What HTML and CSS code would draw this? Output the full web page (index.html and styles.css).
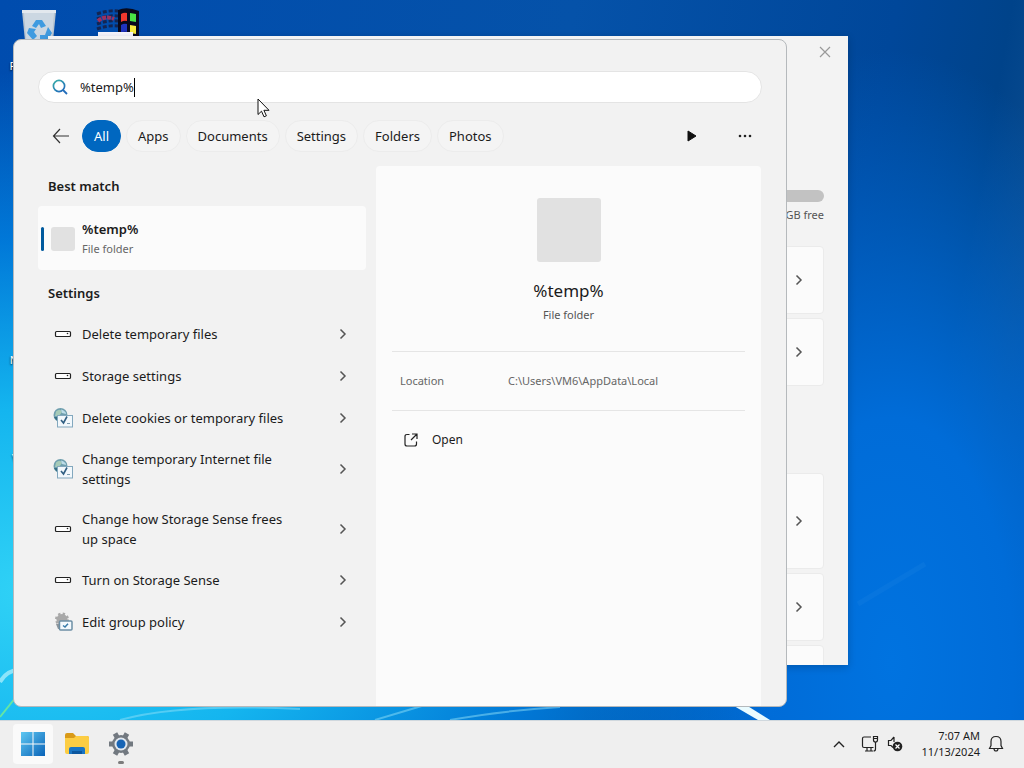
FILE: index.html
```
<!DOCTYPE html>
<html lang="en">
<head>
    <meta charset="UTF-8">
    <title>Search</title>
    <meta name="viewport" content="width=device-width, initial-scale=1.0">
    <link rel="stylesheet" href="styles.css">
</head>
<body>
    <!-- shared icons -->
    <svg class="symbols" aria-hidden="true">
        <symbol id="chevron" viewBox="0 0 8 12"><path d="M1.5 1.5 6 6 1.5 10.5" fill="none" stroke="currentColor" stroke-width="1.5"/></symbol>
        <symbol id="drive" viewBox="0 0 20 20"><rect x="2.5" y="7.5" width="15" height="5" rx="1" fill="#fff" stroke="#222" stroke-width="1.2"/><circle cx="14.5" cy="9.500" r="0.8" fill="#222"/></symbol>
        <symbol id="internet" viewBox="0 0 20 20">
            <circle cx="7.500" cy="7" r="7" fill="#6f9fae"/>
            <path d="M3 3.500Q7 0 9 4L6 8 2 8Z" fill="#a7cbb9"/>
            <path d="M8 1.500Q13 3 13 6L9 5Z" fill="#bcdce8"/>
            <path d="M1 9Q3 13 7 13.500L5 9Z" fill="#376f85"/>
            <rect x="4.500" y="7.500" width="15" height="11.500" fill="#f2f8fc" stroke="#83a8be"/>
            <path d="m8 12 2.500 3L14 8.500" fill="none" stroke="#315f83" stroke-width="1.600"/>
            <path d="M14 15.500h3" stroke="#7d9db1"/>
        </symbol>
        <symbol id="policy" viewBox="0 0 20 20">
            <circle cx="9" cy="7.500" r="5.500" fill="#a9a9a9" stroke="#a9a9a9" stroke-width="3" stroke-dasharray="2.200 2.120"/>
            <path d="M3 12h6v5H5z" fill="#8d959b"/>
            <rect x="6.500" y="9" width="12.500" height="9" rx="1" fill="#f4f9fd" stroke="#6d8fa5" stroke-width="1.500"/>
            <path d="m10 13.500 2 1.500 3-3.200" fill="none" stroke="#397ba9" stroke-width="1.500"/>
        </symbol>
    </svg>

    <main class="desktop">
        <svg class="wallpaper" viewBox="0 0 1024 720" preserveAspectRatio="none" aria-hidden="true">
            <path d="M0 682Q6 671 20 669" fill="none" stroke="#8be4fa" stroke-width="4"/>
            <path d="M0 717 16 697" stroke="#65e6a3" stroke-width="2"/>
            <path d="M120 720Q180 703 300 709" fill="none" stroke="#8fe0f8" stroke-width="2" opacity=".5"/>
            <path d="M375 720 425 705M450 720Q500 711 560 707" fill="none" stroke="#8fe0f8" stroke-width="2" opacity=".5"/>
            <path d="M734 706 746 705 770 720H758Z" fill="#e9fbff"/>
            <path d="M858 604 925 564" stroke="#43a0ee" stroke-width="5" opacity=".1"/>
        </svg>
        <div class="shortcuts">
            <div class="shortcut">
                <svg width="40" height="44" viewBox="0 0 40 44"><path d="M3 3h34l-4 40H7Z" fill="#b9c5d0"/><path d="M5 5h30l-3 35H8Z" fill="#cbd7e2"/><path d="M3 2h34v3H3z" fill="#e2e8ee"/><g fill="#3f9be0"><path d="m13 18 4-6h6l4 6-5 2-2-4-3 4Z"/><path d="m10 20 7 1-2 3 3 4-4 4-6-7Z"/><path d="m29 19 4 6-4 7h-8v-5h5Z"/></g></svg>
                <span>Recycle Bin</span>
            </div>
            <div class="shortcut">
                <svg width="44" height="30" viewBox="0 0 44 30"><g fill="none" stroke="#142552" stroke-width="3" stroke-dasharray="4 2"><path d="M1 6Q12 2 22 3M1 11Q12 7 22 8M1 16Q12 12 22 13M1 21Q12 17 22 18"/></g><path d="M2 13Q9 7 18 11" fill="none" stroke="#9a315f" stroke-width="4" stroke-dasharray="4 1"/><path d="M22 2Q31-2 43 3V29H22Z" fill="#08091c"/><path d="M25 6q3-2 6-1v8q-3-1-6 1Z" fill="#f0382e"/><path d="m34 5 6 1v8l-6-1Z" fill="#4ae345"/><path d="M25 17q3-2 6-1v8q-3-1-6 1Z" fill="#1f34c0"/><path d="m34 17 6 1v8l-6-1Z" fill="#f6ed3e"/><path d="M2 24h35v6H2z" fill="#f7f7ff"/></svg>
            </div>
            <div class="shortcut"><span>Internet</span></div>
            <div class="shortcut"></div>
            <div class="shortcut"></div>
            <div class="shortcut"></div>
            <div class="shortcut"><span>Notepad++</span></div>
            <div class="shortcut"></div>
            <div class="shortcut"><span>VirtualBox</span></div>
        </div>

        <section class="storage-window" aria-label="Storage">
            <button class="close" aria-label="Close"><svg width="12" height="12" viewBox="0 0 12 12"><path d="m1 1 10 10M11 1 1 11" stroke="#999" stroke-width="1.200"/></svg></button>
            <div class="capacity"></div>
            <p class="free">GB free</p>
            <div class="storage-cards">
                <button class="card" aria-label="Storage item"><svg class="chev"><use href="#chevron"/></svg></button>
                <button class="card" aria-label="Storage item"><svg class="chev"><use href="#chevron"/></svg></button>
                <button class="card tall" aria-label="Storage item"><svg class="chev"><use href="#chevron"/></svg></button>
                <button class="card" aria-label="Storage item"><svg class="chev"><use href="#chevron"/></svg></button>
                <button class="card" aria-label="Storage item"></button>
            </div>
        </section>

        <section class="search-panel" aria-label="Search">
            <label class="search-box">
                <svg width="18" height="18" viewBox="0 0 18 18"><defs><linearGradient id="lens" x2="0.7" y2="1"><stop stop-color="#38afa8"/><stop offset="1" stop-color="#226dbb"/></linearGradient></defs><path d="m12 12 4 4" stroke="#226dbb" stroke-width="1.800"/><circle cx="8" cy="8" r="5.600" fill="none" stroke="url(#lens)" stroke-width="1.700"/></svg>
                <span class="query"><input type="text" value="%temp%" aria-label="Search"><span class="caret"></span></span>
            </label>
            <nav class="filters">
                <button class="back" aria-label="Back"><svg width="18" height="16" viewBox="0 0 18 16"><path d="M17 8H1.500M8 1 1.500 8 8 15" fill="none" stroke="#333" stroke-width="1.200"/></svg></button>
                <button class="filter active">All</button>
                <button class="filter">Apps</button>
                <button class="filter">Documents</button>
                <button class="filter">Settings</button>
                <button class="filter">Folders</button>
                <button class="filter">Photos</button>
                <button class="icon-button next" aria-label="More filters"><svg width="12" height="14" viewBox="0 0 12 14"><path d="M2 2v10l8-5Z" fill="#111" stroke="#111" stroke-linejoin="round"/></svg></button>
                <button class="icon-button" aria-label="Options"><svg width="14" height="4" viewBox="0 0 14 4"><g fill="#222"><circle cx="2" cy="2" r="1.300"/><circle cx="7" cy="2" r="1.300"/><circle cx="12" cy="2" r="1.300"/></g></svg></button>
            </nav>
            <div class="results">
                <div class="result-list">
                    <h2>Best match</h2>
                    <button class="best">
                        <span class="thumb"></span>
                        <span class="best-text"><strong>%temp%</strong><small>File folder</small></span>
                    </button>
                    <h2>Settings</h2>
                    <button class="result"><svg class="icon"><use href="#drive"/></svg><span>Delete temporary files</span><svg class="chev"><use href="#chevron"/></svg></button>
                    <button class="result"><svg class="icon"><use href="#drive"/></svg><span>Storage settings</span><svg class="chev"><use href="#chevron"/></svg></button>
                    <button class="result"><svg class="icon"><use href="#internet"/></svg><span>Delete cookies or temporary files</span><svg class="chev"><use href="#chevron"/></svg></button>
                    <button class="result"><svg class="icon"><use href="#internet"/></svg><span>Change temporary Internet file settings</span><svg class="chev"><use href="#chevron"/></svg></button>
                    <button class="result"><svg class="icon"><use href="#drive"/></svg><span>Change how Storage Sense frees up space</span><svg class="chev"><use href="#chevron"/></svg></button>
                    <button class="result"><svg class="icon"><use href="#drive"/></svg><span>Turn on Storage Sense</span><svg class="chev"><use href="#chevron"/></svg></button>
                    <button class="result"><svg class="icon"><use href="#policy"/></svg><span>Edit group policy</span><svg class="chev"><use href="#chevron"/></svg></button>
                </div>
                <div class="preview">
                    <div class="preview-icon"></div>
                    <h1>%temp%</h1>
                    <p class="kind">File folder</p>
                    <dl class="details">
                        <dt>Location</dt>
                        <dd>C:\Users\VM6\AppData\Local</dd>
                    </dl>
                    <button class="open"><svg width="14" height="14" viewBox="0 0 14 14"><path d="M5.500 1.500H3Q1 1.500 1 3.500V11Q1 13 3 13h7.500q2 0 2-2V8.500M8 1h5v5M13 1 7 7" fill="none" stroke="#222" stroke-width="1.200"/></svg>Open</button>
                </div>
            </div>
        </section>

        <svg class="pointer" width="13" height="20" viewBox="0 0 13 20" aria-hidden="true"><path d="M1 1v15.500l3.500-3.300 2.500 5.600 2.400-1-2.500-5.500H12Z" fill="#fff" stroke="#111"/></svg>
    </main>

    <footer class="taskbar">
        <button class="task start" aria-label="Start"><svg width="24" height="24" viewBox="0 0 24 24"><defs><linearGradient id="win" x2="1" y2="1"><stop stop-color="#5ec8f2"/><stop offset="1" stop-color="#0a63b8"/></linearGradient></defs><path d="M0 0h11.500v11.500H0zM12.500 0H24v11.500H12.500zM0 12.500h11.500V24H0zM12.500 12.500H24V24H12.500z" fill="url(#win)"/></svg></button>
        <button class="task" aria-label="File Explorer"><svg width="26" height="24" viewBox="0 0 26 24"><path d="M1 3q0-2 2-2h6l3 3h11q2 0 2 2v6H1Z" fill="#d99a19"/><path d="M1 6h9l2-2h11q2 0 2 2v14q0 2-2 2H3q-2 0-2-2Z" fill="#fccd43"/><path d="M5 22v-5q0-2 2-2h12q2 0 2 2v5Z" fill="#1975c4"/><path d="M8 19h10v3H8z" fill="#0c579f"/></svg></button>
        <button class="task running" aria-label="Settings"><svg width="26" height="26" viewBox="0 0 26 26"><g stroke="#727980" stroke-width="5"><path d="M1 13h24M7 2.600l12 20.800M19 2.600 7 23.400"/></g><circle cx="13" cy="13" r="9" fill="#727980"/><circle cx="13" cy="13" r="6.500" fill="#e2e8ef"/><circle cx="13" cy="13" r="4.500" fill="#1764b5"/></svg></button>
        <div class="tray">
            <button aria-label="Show hidden icons"><svg width="12" height="8" viewBox="0 0 12 8"><path d="M1 7 6 2l5 5" fill="none" stroke="#222" stroke-width="1.400"/></svg></button>
            <button class="network" aria-label="Network"><svg width="18" height="18" viewBox="0 0 18 18"><path d="M10 2H3Q1.500 2 1.500 3.500V11q0 1.500 1.500 1.500h9.500M6 12.500V16M10 12.500V16M4 16h8M14.500 7v7q0 2-2 2M12.500 1.500h4V5q0 2-2 2t-2-2ZM12.500 3.500h4" fill="none" stroke="#222" stroke-width="1.200"/></svg></button>
            <button aria-label="Volume muted"><svg width="16" height="16" viewBox="0 0 16 16"><path d="M7 1 4 4.500H1.500v5H4l2 2M7 1v5" fill="none" stroke="#222" stroke-width="1.200"/><circle cx="10.500" cy="10.500" r="4.800" fill="#222"/><path d="m8.500 8.500 4 4M12.500 8.500l-4 4" stroke="#fff" stroke-width="1.200"/></svg></button>
            <button class="clock"><time>7:07 AM</time><time>11/13/2024</time></button>
            <button aria-label="Notifications"><svg width="16" height="18" viewBox="0 0 16 18"><path d="M1.500 13.500 3 10.500V6.500q0-5 5-5t5 5v4l1.500 3ZM6 13.500q0 2.500 2 2.500t2-2.500" fill="none" stroke="#222" stroke-width="1.200"/></svg></button>
        </div>
    </footer>
</body>
</html>
```
FILE: styles.css
```
* { box-sizing: border-box; }
body { margin: 0; height: 100vh; display: flex; flex-direction: column; overflow: hidden; font-family: "Noto Sans", "Open Sans", sans-serif; font-size: 13px; line-height: 20px; color: #1b1b1b; }
button { font: inherit; color: inherit; background: none; border: none; padding: 0; text-align: left; }
h1, h2, p, dl, dd { margin: 0; }
svg { display: block; flex-shrink: 0; }
.symbols { position: absolute; width: 0; height: 0; }
.chev { width: 8px; height: 12px; color: #555; }

/* desktop */
.desktop { position: relative; flex: 1; min-height: 0; overflow: hidden;
    background: radial-gradient(ellipse 75% 72% at 3% 82%, #30d2f6 0%, #14b5ef 35%, rgba(0,130,226,0.8) 68%, rgba(0,90,200,0) 100%), radial-gradient(ellipse 30% 85% at 87% 92%, #0073e0 0%, #006cd8 40%, rgba(0,95,200,0) 100%), linear-gradient(100deg, #004cae 0%, #0552a9 50%, #00479a 78%, #00438a 88%, #0a4c90 93%, #0058b8 100%); }
.wallpaper { position: absolute; inset: 0; width: 100%; height: 100%; }
.shortcuts { position: relative; display: grid; grid-template-columns: 75px 75px; grid-auto-rows: 98px; column-gap: 4px; padding: 8px 0 0 1px; }
.shortcut { height: 64px; display: flex; flex-direction: column; align-items: center; color: #fff; font-size: 11px; line-height: 12px; text-shadow: 0 1px 2px #000; }
.shortcut span { margin-top: auto; white-space: nowrap; }

/* storage window behind the search panel */
.storage-window { position: absolute; left: 48px; right: 176px; top: 36px; bottom: 55px; padding: 10px 24px 0; background: #f3f3f3; overflow: hidden; display: flex; flex-direction: column; box-shadow: 0 2px 8px rgba(0,0,0,0.2); }
.close { align-self: flex-end; padding: 0; margin-right: -7px; }
.capacity { flex-shrink: 0; margin-top: 132px; height: 12px; border-radius: 6px; background: #c2c2c2; }
.free { text-align: right; font-size: 11px; color: #555; margin: 3px 0 21px; }
.storage-cards { display: flex; flex-direction: column; gap: 4px; }
.card { flex-shrink: 0; height: 68px; padding-right: 20px; display: flex; align-items: center; justify-content: flex-end; background: #fbfbfb; border: 1px solid #ebebeb; border-radius: 4px; }
.card.tall { height: 96px; margin-top: 83px; }

/* search panel */
.search-panel { position: absolute; left: 13px; right: 237px; top: 39px; bottom: 13px; padding: 31px 24px 0; background: #f2f2f2; border: 1px solid #b5b9bc; border-radius: 8px; overflow: hidden; display: flex; flex-direction: column; }
.search-box { flex-shrink: 0; height: 32px; display: flex; align-items: center; gap: 11px; padding: 0 12px; background: #fff; border: 1px solid #e4e4e4; border-radius: 16px; }
.query { flex: 1; min-width: 0; display: flex; align-items: center; }
.query input { field-sizing: content; max-width: 100%; border: none; outline: none; padding: 0; background: none; font: inherit; color: inherit; caret-color: transparent; }
.caret { width: 1px; height: 19px; background: #000; }
.filters { flex-shrink: 0; display: flex; align-items: center; gap: 5px; margin-top: 17px; padding: 0 1px 0 14px; }
.back { margin-right: 7px; }
.filter { height: 32px; padding: 0 11px; border: 1px solid #ececec; border-radius: 16px; background: #f4f4f4; }
.filter.active { background: #0067c0; border-color: #0067c0; color: #fff; }
.icon-button { width: 32px; height: 32px; display: flex; align-items: center; justify-content: center; }
.next { margin: 0 16px 0 auto; }

.results { flex: 1; min-height: 0; display: flex; gap: 10px; margin-top: 14px; padding-right: 1px; }
.result-list { width: 328px; flex-shrink: 0; }
h2 { font-size: 13px; font-weight: 600; line-height: 20px; padding: 10px 10px; }
.best { position: relative; width: 100%; height: 64px; padding: 2px 13px 0; margin-bottom: 3px; display: flex; align-items: center; gap: 7px; background: #fbfbfb; border-radius: 4px; }
.best::before { content: ""; position: absolute; left: 3px; top: 21px; width: 3px; height: 24px; border-radius: 2px; background: #005a9e; }
.thumb { width: 24px; height: 24px; border-radius: 3px; background: #e1e1e1; }
.best-text { display: flex; flex-direction: column; }
.best strong { font-weight: 600; }
.best small { font-size: 11px; color: #666; }
.result { width: 100%; min-height: 42px; display: flex; align-items: center; gap: 9px; padding: 10px 19px 10px 15px; }
.result span { flex: 1; padding-right: 32px; }
.icon { width: 20px; height: 20px; }

.preview { flex: 1; min-width: 0; padding: 32px 16px; background: #fbfbfb; border-radius: 4px 4px 0 0; text-align: center; }
.preview-icon { width: 64px; height: 64px; margin: 0 auto 17px; border-radius: 3px; background: #e1e1e1; }
h1 { font-size: 17px; font-weight: 400; line-height: 24px; }
.kind { font-size: 11px; color: #555; margin-top: 2px; }
.details { display: flex; margin-top: 26px; padding: 20px 8px; border: solid #e5e5e5; border-width: 1px 0; font-size: 11px; line-height: 18px; color: #666; text-align: left; }
.details dt { width: 108px; }
.open { display: flex; align-items: center; gap: 14px; padding: 19px 12px; font-size: 12px; }

.pointer { position: absolute; left: 257px; top: 98px; }

/* taskbar */
.taskbar { height: 48px; flex-shrink: 0; display: flex; align-items: center; gap: 4px; padding: 0 20px 2px 13px; background: #efefef; border-top: 1px solid #d0d8de; }
.task { position: relative; width: 40px; height: 40px; display: flex; align-items: center; justify-content: center; border-radius: 4px; }
.start { background: #fafafa; }
.running::after { content: ""; position: absolute; left: 17px; bottom: 0; width: 6px; height: 3px; border-radius: 2px; background: #7c7c7c; }
.tray { margin-left: auto; display: flex; align-items: center; gap: 8px; }
.tray .network { margin-left: 8px; }
.clock { display: flex; flex-direction: column; margin-left: 10px; text-align: right; font-size: 11px; line-height: 16px; }
```
